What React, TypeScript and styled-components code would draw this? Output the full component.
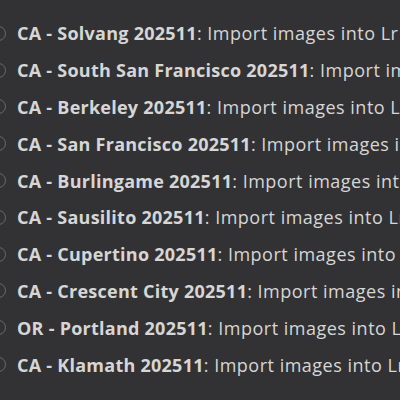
import React from "react"
import styled, { createGlobalStyle } from "styled-components"

const GlobalStyle = createGlobalStyle`
  html, body {
    margin: 0;
    padding: 0;
    background: #323234;
    overflow: hidden;
  }
`

const tasks = [
  { code: "CA", place: "Solvang" },
  { code: "CA", place: "South San Francisco" },
  { code: "CA", place: "Berkeley" },
  { code: "CA", place: "San Francisco" },
  { code: "CA", place: "Burlingame" },
  { code: "CA", place: "Sausilito" },
  { code: "CA", place: "Cupertino" },
  { code: "CA", place: "Crescent City" },
  { code: "OR", place: "Portland" },
  { code: "CA", place: "Klamath" },
]

export default function App() {
  return (
    <>
      <GlobalStyle />
      <StyledList>
        {tasks.map((t, i) => (
          <StyledRow key={i}>
            <StyledCheck />
            <StyledText>
              <b>
                {t.code} - {t.place} 202511
              </b>
              : Import images into Lr
            </StyledText>
          </StyledRow>
        ))}
      </StyledList>
    </>
  )
}

const StyledList = styled.ul`
  list-style: none;
  margin: 0;
  padding: 15px 0 0 0;
  width: 400px;
  height: 400px;
  overflow: hidden;
  display: flex;
  flex-direction: column;
  font-family: "Open Sans", "Noto Sans", sans-serif;
  font-size: 18px;
  color: #d6d6d6;
`

const StyledRow = styled.li`
  height: 36.8px;
  display: flex;
  align-items: center;
  gap: 11px;
  margin-left: -9px;
  white-space: nowrap;
`

const StyledCheck = styled.span`
  flex: none;
  width: 13px;
  height: 13px;
  border: 1.5px solid #6a6a6c;
  border-radius: 50%;
`

const StyledText = styled.span`
  letter-spacing: 0.5px;
  b {
    font-weight: 700;
    letter-spacing: 0.25px;
  }
`
